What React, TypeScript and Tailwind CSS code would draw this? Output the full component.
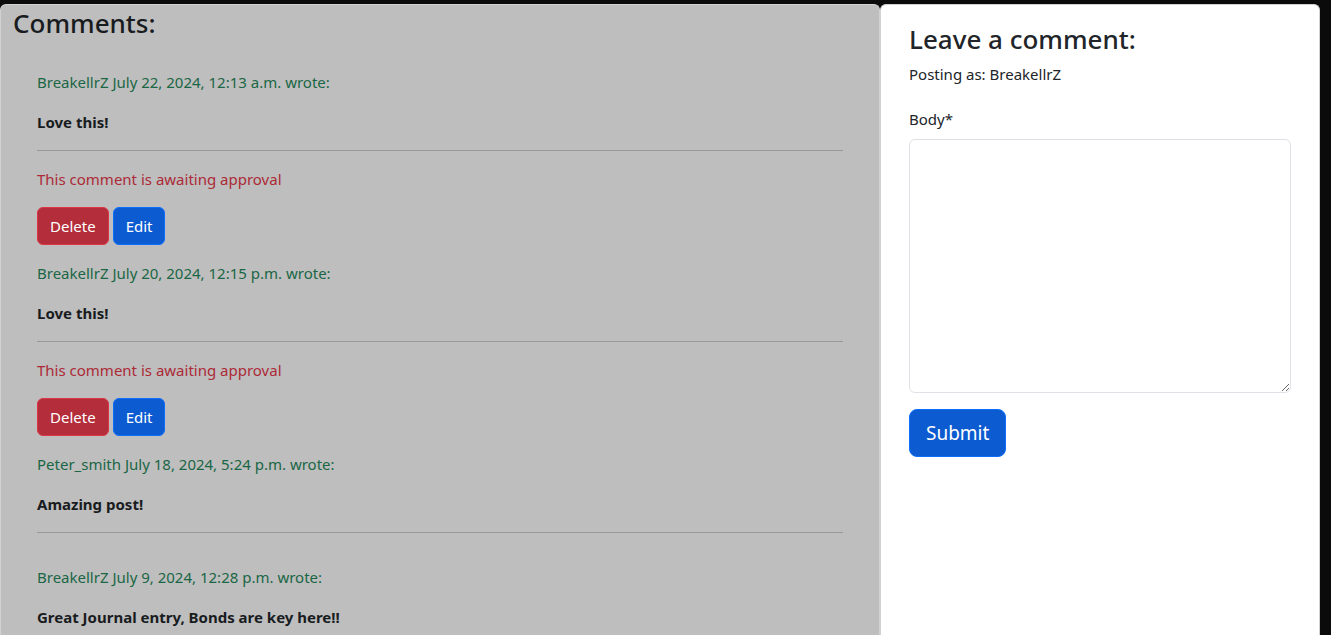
import React from "react";

type Comment = {
  author: string;
  date: string;
  body: string;
  pending: boolean;
};

const comments: Comment[] = [
  { author: "BreakellrZ", date: "July 22, 2024, 12:13 a.m.", body: "Love this!", pending: true },
  { author: "BreakellrZ", date: "July 20, 2024, 12:15 p.m.", body: "Love this!", pending: true },
  { author: "Peter_smith", date: "July 18, 2024, 5:24 p.m.", body: "Amazing post!", pending: false },
  { author: "BreakellrZ", date: "July 9, 2024, 12:28 p.m.", body: "Great Journal entry, Bonds are key here!!", pending: false },
];

function CommentItem({ comment, last }: { comment: Comment; last: boolean }) {
  return (
    <article>
      <p className="mb-4 text-[#1a6645]">
        {comment.author} {comment.date} wrote:
      </p>
      <p className="font-bold text-[#191c1f]">{comment.body}</p>
      {!last && <hr className="my-4 border-[#999999]" />}
      {comment.pending && (
        <>
          <p className="mb-4 text-[#ac2a37]">This comment is awaiting approval</p>
          <div className="mb-4 flex gap-1">
            <button type="button" className="rounded-md border border-[#dc3545] bg-[#b32d3a] px-3 py-1.5 text-white">
              Delete
            </button>
            <button type="button" className="rounded-md border border-[#0d6efd] bg-[#0d5bd0] px-3 py-1.5 text-white">
              Edit
            </button>
          </div>
        </>
      )}
      {!comment.pending && !last && <div className="h-4" />}
    </article>
  );
}

export default function App() {
  return (
    <div className="min-h-screen bg-[#0b0b0b] pt-1 pr-[11px] font-['Noto_Sans','Open_Sans',sans-serif] text-[15px] leading-6 font-normal text-[#212529]">
      <main className="grid min-h-[calc(100vh-4px)] grid-cols-1 md:grid-cols-3">
        <section className="rounded-t-md border border-b-0 border-[#d2d2d2] bg-[#bebebe] md:col-span-2">
          <h3 className="px-3 pt-0.5 text-[26px] leading-8 font-medium text-[#191c1f]">Comments:</h3>
          <div className="px-9 pt-[31px]">
            {comments.map((comment, i) => (
              <CommentItem key={comment.date} comment={comment} last={i === comments.length - 1} />
            ))}
          </div>
        </section>
        <section className="rounded-t-md border border-b-0 border-[#d2d2d2] bg-white px-7 pt-4">
          <h3 className="mb-[7px] pt-0.5 text-[26px] leading-8 font-medium">Leave a comment:</h3>
          <p className="mb-[21px]">Posting as: BreakellrZ</p>
          <form onSubmit={(e) => e.preventDefault()}>
            <label htmlFor="body" className="mb-2 block">
              Body*
            </label>
            <textarea
              id="body"
              required
              className="block h-[254px] w-full resize-y rounded-md border border-[#dee2e6] bg-white px-3 py-1.5 outline-none focus:border-[#86b7fe]"
            />
            <button
              type="submit"
              className="mt-4 rounded-lg border border-[#0d6efd] bg-[#0d5bd0] px-4 py-2 text-[19px] leading-[30px] text-white"
            >
              Submit
            </button>
          </form>
        </section>
      </main>
    </div>
  );
}
